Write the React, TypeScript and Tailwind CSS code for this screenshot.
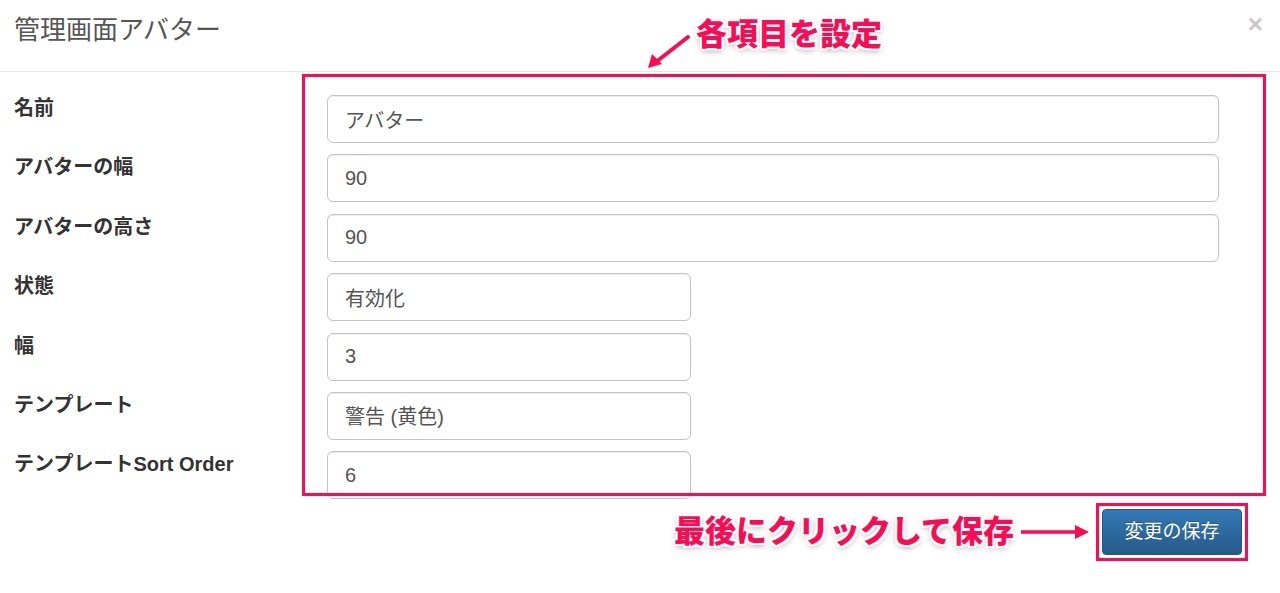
const fields = [
  { label: "名前", value: "アバター", wide: true },
  { label: "アバターの幅", value: "90", wide: true },
  { label: "アバターの高さ", value: "90", wide: true },
  { label: "状態", value: "有効化", wide: false },
  { label: "幅", value: "3", wide: false },
  { label: "テンプレート", value: "警告 (黄色)", wide: false },
  { label: "テンプレートSort Order", value: "6", wide: false },
];

const outline =
  "[text-shadow:2px_0_0_#fff,-2px_0_0_#fff,0_2px_0_#fff,0_-2px_0_#fff,2px_2px_0_#fff,-2px_-2px_0_#fff,2px_-2px_0_#fff,-2px_2px_0_#fff,0_2px_6px_rgba(0,0,0,0.45)]";

export default function App() {
  return (
    <div className="relative w-[1280px] h-[593px] overflow-hidden bg-white font-['Liberation_Sans','Noto_Sans_CJK_JP',sans-serif]">
      <div className="relative h-[72px] border-b border-[#e5e5e5] flex items-center justify-between pl-[14px] pr-[17px]">
        <h4 className="mb-[12px] text-[26px] leading-[30px] text-[#555]">管理画面アバター</h4>
        <span className="mb-[24px] text-[26px] font-bold leading-none text-[#c8c8c8]">×</span>

        <svg className="absolute left-[644px] top-[32px]" width="50" height="40" viewBox="0 0 50 40">
          <line x1="44" y1="5" x2="12" y2="30" stroke="#fd0a54" strokeWidth="4" strokeLinecap="round" />
          <polygon points="4,36 8,22 18,32" fill="#fd0a54" />
        </svg>
        <span
          className={`absolute left-[696px] top-[16px] text-[31px] font-black leading-[38px] text-[#fd0a54] ${outline}`}
        >
          各項目を設定
        </span>
      </div>

      <div className="px-[14px] pt-[23px] flex flex-col gap-[11.4px]">
        {fields.map((f) => (
          <div key={f.label} className="flex items-start h-[48px]">
            <label className="w-[313px] shrink-0 text-[20px] font-bold leading-[26px] text-[#333]">{f.label}</label>
            <input
              readOnly
              defaultValue={f.value}
              className={`${f.wide ? "w-[892px]" : "w-[364px]"} h-[48px] rounded-[6px] border border-[#c4c4c4] bg-white px-[17px] text-[20px] text-[#555] shadow-[inset_0_1px_1px_rgba(0,0,0,0.075)] outline-none`}
            />
          </div>
        ))}
      </div>

      <div className="absolute left-[302px] top-[74px] w-[964px] h-[422px] border-[3px] border-[#fd0a54] pointer-events-none" />

      <div className="mt-[4px] flex items-center justify-end gap-[5px] pr-[32px]">
        <span className={`text-[31px] font-black leading-[38px] text-[#fd0a54] ${outline}`}>最後にクリックして保存</span>
        <svg width="72" height="16" viewBox="0 0 72 16">
          <line x1="2" y1="8" x2="60" y2="8" stroke="#fd0a54" strokeWidth="3.5" />
          <polygon points="56,1 70,8 56,15" fill="#fd0a54" />
        </svg>
        <div className="border-[3px] border-[#fd0a54] p-[3px]">
          <button className="w-[140px] h-[46px] rounded-[4px] border border-[#245580] bg-gradient-to-b from-[#337ab7] to-[#265a88] text-[19px] text-white [text-shadow:0_-1px_0_rgba(0,0,0,0.2)]">
            変更の保存
          </button>
        </div>
      </div>
    </div>
  );
}
